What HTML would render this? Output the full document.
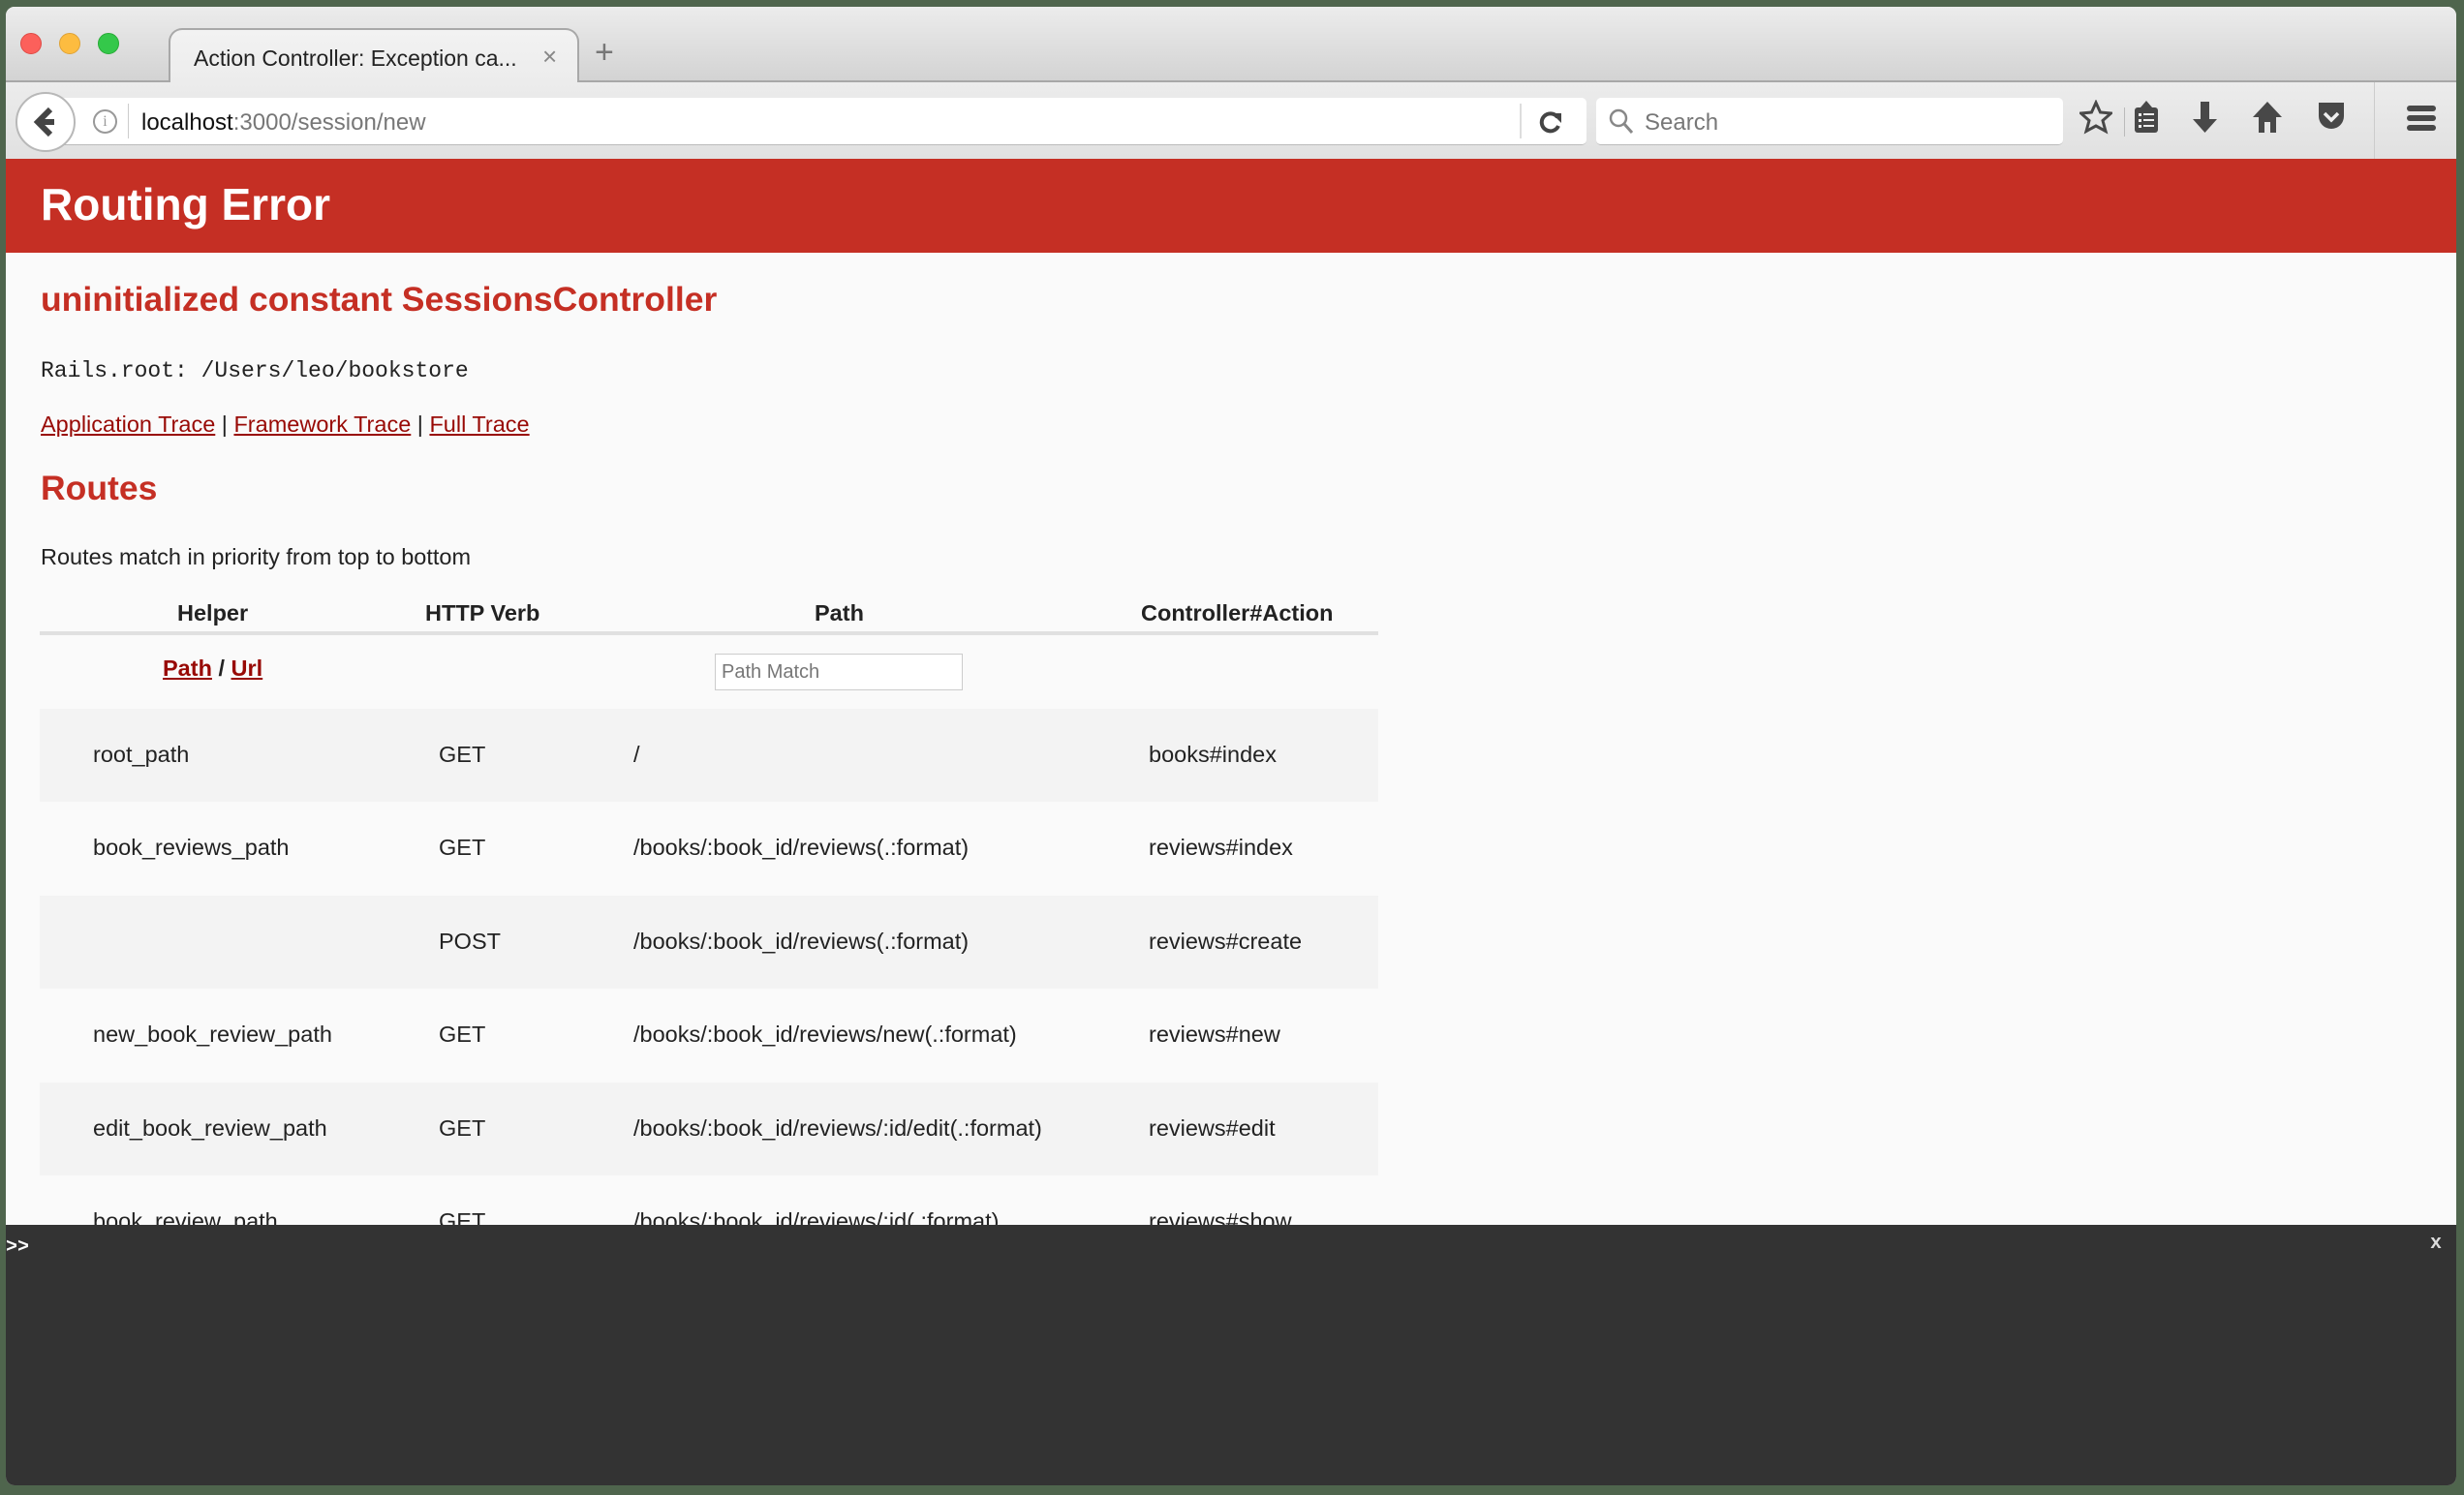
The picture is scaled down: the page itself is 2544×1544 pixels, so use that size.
<!DOCTYPE html>
<html><head><meta charset="utf-8"><style>
*{margin:0;padding:0;box-sizing:border-box}
body{width:2544px;height:1544px;background:#4f654d;position:relative;overflow:hidden;font-family:"Liberation Sans",Arial,sans-serif}
.win{position:absolute;left:6px;top:7px;width:2530px;height:1527px;border-radius:9px;overflow:hidden;background:#fafafa}
.tabbar{position:absolute;left:0;top:0;width:100%;height:78px;background:linear-gradient(#ececec,#d3d3d3);border-bottom:2px solid #a8a8a8}
.dot{position:absolute;top:27px;width:22px;height:22px;border-radius:50%}
.tab{position:absolute;left:168px;top:22px;width:424px;height:58px;border:2px solid #a8a8a8;border-bottom:none;border-radius:14px 14px 0 0;background:linear-gradient(#f2f2f2,#ececec)}
.tab span{position:absolute;left:24px;top:16px;font-size:23px;color:#222}
.toolbar{position:absolute;left:0;top:78px;width:100%;height:86px;background:linear-gradient(#ececec,#e0e0e0);border-bottom:2px solid #c8c8c8}
.url{position:absolute;left:30px;top:16px;width:1602px;height:49px;background:#fff;border-radius:5px;border-bottom:1px solid #bbb}
.search{position:absolute;left:1642px;top:16px;width:482px;height:49px;background:#fff;border-radius:5px;border-bottom:1px solid #bbb}
.back{position:absolute;left:10px;top:10px;width:62px;height:62px;border-radius:50%;background:#fff;border:2px solid #b8b8b8}
.red{position:absolute;left:0;top:157px;width:100%;height:97px;background:#c52f24}
.red h1{position:absolute;left:36px;top:20px;color:#fff;font-size:46px;font-weight:bold}
.t{position:absolute;white-space:nowrap;color:#222;font-size:23.5px}
h2.t{color:#c52f24;font-size:35.5px;font-weight:bold}
a{color:#980905;text-decoration:underline}
.row{position:absolute;left:35px;width:1382px;height:96px}
.con{position:absolute;left:0;top:1258px;width:100%;height:270px;background:#333}
.ic{position:absolute;top:18px}
</style></head><body>
<div class="win">
<div class="tabbar">
<div class="dot" style="left:15px;background:#fc605b;border:1px solid #de4a45"></div>
<div class="dot" style="left:55px;background:#fdbc40;border:1px solid #dea236"></div>
<div class="dot" style="left:95px;background:#34c84a;border:1px solid #27aa35"></div>
<div class="tab"><span>Action Controller: Exception ca...</span><span style="left:384px;color:#888;font-size:26px;top:12px">×</span></div>
<span style="position:absolute;left:608px;top:28px;font-size:34px;color:#777">+</span>
</div>
<div class="toolbar">
<div class="url">
<span style="position:absolute;left:60px;top:12px;width:25px;height:25px;border:2px solid #999;border-radius:50%;font-size:16px;color:#999;text-align:center;line-height:21px;font-family:'Liberation Serif',serif">i</span>
<div style="position:absolute;left:96px;top:6px;width:1px;height:36px;background:#ccc"></div>
<span class="t" style="left:110px;top:12px;font-size:24px;color:#111">localhost<span style="color:#777">:3000/session/new</span></span>
<div style="position:absolute;left:1533px;top:6px;width:2px;height:36px;background:#ddd"></div>
<svg style="position:absolute;left:1552px;top:12px" width="26" height="26" viewBox="0 0 26 26"><path d="M20 8A9 9 0 1 0 21 17" fill="none" stroke="#444" stroke-width="4"/><path d="M14 4h10v10z" fill="#444"/></svg>
</div>
<div class="search"><svg style="position:absolute;left:12px;top:10px" width="28" height="30"><circle cx="11" cy="11" r="8" fill="none" stroke="#888" stroke-width="2.5"/><path d="M17 17l8 9" stroke="#888" stroke-width="3"/></svg><span class="t" style="left:50px;top:12px;font-size:24px;color:#777">Search</span></div>
<div class="back"><svg width="58" height="58" viewBox="0 0 58 58"><path d="M34 16L21 29l13 13M22 29h16" fill="none" stroke="#444" stroke-width="6"/></svg></div>
<svg class="ic" style="left:2141px" width="34" height="36" viewBox="0 0 34 36"><path d="M17 3l4.5 10 11 1-8.5 7.5 3 11L17 27l-10 5.5 3-11L1.5 14l11-1z" fill="none" stroke="#484848" stroke-width="3"/></svg>
<div style="position:absolute;left:2187px;top:26px;width:1px;height:30px;background:#bbb"></div>
<svg class="ic" style="left:2196px" width="30" height="36" viewBox="0 0 30 36" fill="#484848"><rect x="2" y="8" width="24" height="26" rx="3"/><path d="M14 1l6 7H8z"/><g fill="#eee"><rect x="6" y="14" width="3" height="3"/><rect x="6" y="20" width="3" height="3"/><rect x="6" y="26" width="3" height="3"/><rect x="11" y="14" width="11" height="2"/><rect x="11" y="20" width="11" height="2"/><rect x="11" y="26" width="11" height="2"/></g></svg>
<svg class="ic" style="left:2256px" width="30" height="36" viewBox="0 0 30 36" fill="#484848"><path d="M10 2h9v18h8L14.5 34 2 20h8z"/></svg>
<svg class="ic" style="left:2318px" width="34" height="36" viewBox="0 0 34 36" fill="#484848"><path d="M17 2l15 16h-6v16h-6V23h-6v11H8V18H2z"/></svg>
<svg class="ic" style="left:2386px" width="30" height="36" viewBox="0 0 30 36" fill="#484848"><path d="M2 3h26v14a13 13 0 0 1-26 0z"/><path d="M8 14l7 7 7-7" fill="none" stroke="#eee" stroke-width="3.5"/></svg>
<div style="position:absolute;left:2445px;top:0;width:1px;height:86px;background:#ccc"></div>
<svg class="ic" style="left:2478px" width="32" height="36" viewBox="0 0 32 36" fill="#484848"><rect x="1" y="6" width="30" height="6" rx="3"/><rect x="1" y="16" width="30" height="6" rx="3"/><rect x="1" y="26" width="30" height="6" rx="3"/></svg>
</div>
<div class="red"><h1>Routing Error</h1></div>
<h2 class="t" style="left:36px;top:282px">uninitialized constant SessionsController</h2>
<div class="t" style="left:36px;top:363px;font-family:'Liberation Mono',monospace;font-size:23px">Rails.root: /Users/leo/bookstore</div>
<div class="t" style="left:36px;top:418px"><a>Application Trace</a> | <a>Framework Trace</a> | <a>Full Trace</a></div>
<h2 class="t" style="left:36px;top:477px">Routes</h2>
<div class="t" style="left:36px;top:555px">Routes match in priority from top to bottom</div>
<div class="t" style="left:177px;top:613px;font-weight:bold">Helper</div>
<div class="t" style="left:433px;top:613px;font-weight:bold">HTTP Verb</div>
<div class="t" style="left:835px;top:613px;font-weight:bold">Path</div>
<div class="t" style="left:1172px;top:613px;font-weight:bold">Controller#Action</div>
<div style="position:absolute;left:35px;top:645px;width:1382px;height:4px;background:#e0e0e0"></div>
<div class="t" style="left:162px;top:670px;font-weight:bold"><a>Path</a> / <a>Url</a></div>
<div style="position:absolute;left:732px;top:668px;width:256px;height:38px;background:#fff;border:1px solid #ccc"><span class="t" style="left:6px;top:7px;font-size:20px;color:#777">Path Match</span></div>
<div class="row" style="top:725px;background:#f3f3f3"></div>
<div class="row" style="top:918px;background:#f3f3f3"></div>
<div class="row" style="top:1111px;background:#f3f3f3"></div>
<div class="t" style="left:90px;top:759px">root_path</div><div class="t" style="left:447px;top:759px">GET</div><div class="t" style="left:648px;top:759px">/</div><div class="t" style="left:1180px;top:759px">books#index</div>
<div class="t" style="left:90px;top:855px">book_reviews_path</div><div class="t" style="left:447px;top:855px">GET</div><div class="t" style="left:648px;top:855px">/books/:book_id/reviews(.:format)</div><div class="t" style="left:1180px;top:855px">reviews#index</div>
<div class="t" style="left:447px;top:952px">POST</div><div class="t" style="left:648px;top:952px">/books/:book_id/reviews(.:format)</div><div class="t" style="left:1180px;top:952px">reviews#create</div>
<div class="t" style="left:90px;top:1048px">new_book_review_path</div><div class="t" style="left:447px;top:1048px">GET</div><div class="t" style="left:648px;top:1048px">/books/:book_id/reviews/new(.:format)</div><div class="t" style="left:1180px;top:1048px">reviews#new</div>
<div class="t" style="left:90px;top:1145px">edit_book_review_path</div><div class="t" style="left:447px;top:1145px">GET</div><div class="t" style="left:648px;top:1145px">/books/:book_id/reviews/:id/edit(.:format)</div><div class="t" style="left:1180px;top:1145px">reviews#edit</div>
<div class="t" style="left:90px;top:1241px">book_review_path</div><div class="t" style="left:447px;top:1241px">GET</div><div class="t" style="left:648px;top:1241px">/books/:book_id/reviews/:id(.:format)</div><div class="t" style="left:1180px;top:1241px">reviews#show</div>
<div class="con"><span class="t" style="left:0;top:12px;color:#fff;font-family:'Liberation Mono',monospace;font-size:20px;font-weight:bold">&gt;&gt;</span><span class="t" style="left:2503px;top:8px;color:#ddd;font-family:'Liberation Mono',monospace;font-size:20px;font-weight:bold">x</span></div>
</div>
</body></html>
